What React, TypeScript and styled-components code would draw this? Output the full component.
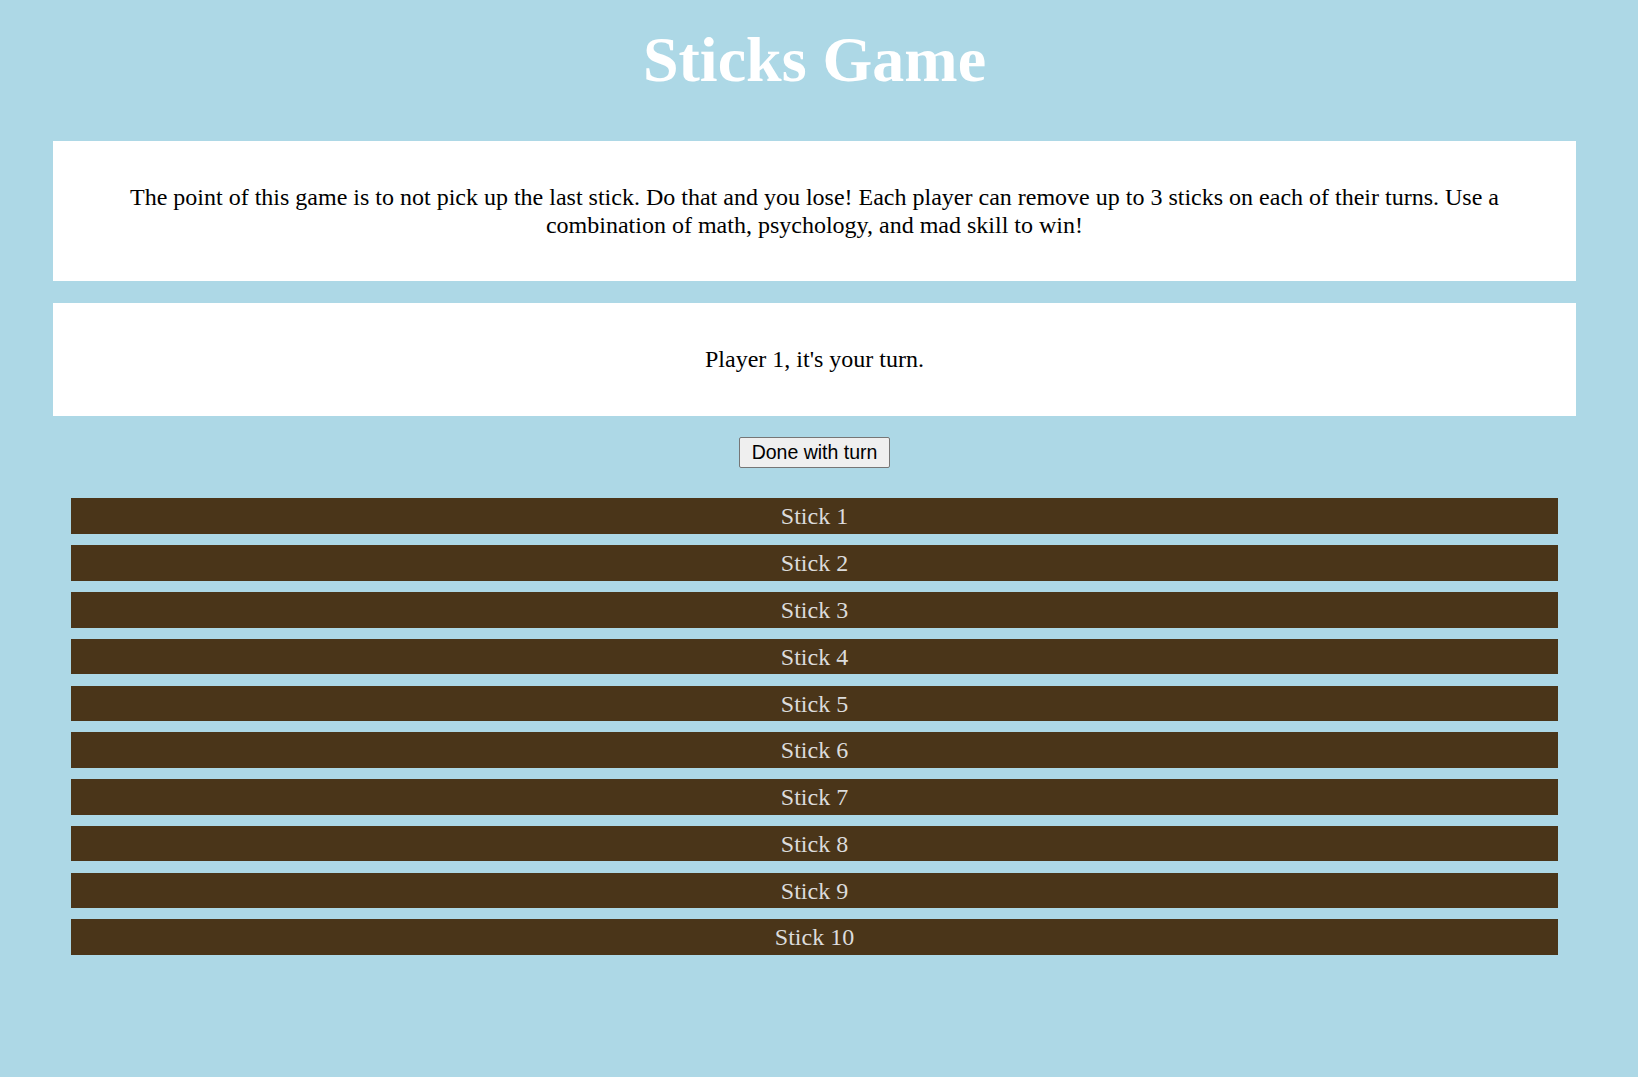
import React from "react";
import styled, { createGlobalStyle } from "styled-components";

const GlobalStyle = createGlobalStyle`
  html, body {
    background: #add8e6;
  }
  body {
    margin: 8px;
    font-family: "Liberation Serif", "Times New Roman", serif;
  }
`;

const Page = styled.div`
  padding-right: 9px;
  display: flex;
  flex-direction: column;
  align-items: stretch;
`;

const Title = styled.h1`
  margin: 15px 0 0;
  font-size: 64px;
  line-height: 73.6px;
  font-weight: bold;
  color: #ffffff;
  text-align: center;
`;

const Panel = styled.section<{ $top: number; $padTop: number; $padBottom: number }>`
  margin: ${(p) => p.$top}px 45px 0;
  background: #ffffff;
  padding: ${(p) => p.$padTop}px 60px ${(p) => p.$padBottom}px;
  text-align: center;
  font-size: 24px;
  line-height: 27.6px;
  color: #000000;
`;

const ButtonRow = styled.div`
  display: flex;
  justify-content: center;
  margin-top: 21px;
`;

const TurnButton = styled.button`
  font-family: "Liberation Sans", Arial, sans-serif;
  font-size: 19.5px;
  line-height: 23px;
  padding: 3px 12px;
  background: #efefef;
  color: #000;
  border: 1px solid #767676;
  border-radius: 2px;
  cursor: pointer;
`;

const StickList = styled.div`
  display: flex;
  flex-direction: column;
  gap: 11.2px;
  margin: 30px 63px 0;
`;

const Stick = styled.div`
  background: #4a3519;
  color: #dcdcdc;
  height: 35.6px;
  font-size: 24px;
  line-height: 36px;
  text-align: center;
`;

export default function App() {
  const sticks = Array.from({ length: 10 }, (_, i) => i + 1);
  return (
    <>
      <GlobalStyle />
      <Page>
        <Title>Sticks Game</Title>
        <Panel $top={44} $padTop={43.5} $padBottom={42}>
          The point of this game is to not pick up the last stick. Do that and
          you lose! Each player can remove up to 3 sticks on each of their
          turns. Use a combination of math, psychology, and mad skill to win!
        </Panel>
        <Panel $top={22} $padTop={42.5} $padBottom={43}>
          Player 1, it's your turn.
        </Panel>
        <ButtonRow>
          <TurnButton>Done with turn</TurnButton>
        </ButtonRow>
        <StickList>
          {sticks.map((n) => (
            <Stick key={n}>Stick {n}</Stick>
          ))}
        </StickList>
      </Page>
    </>
  );
}
